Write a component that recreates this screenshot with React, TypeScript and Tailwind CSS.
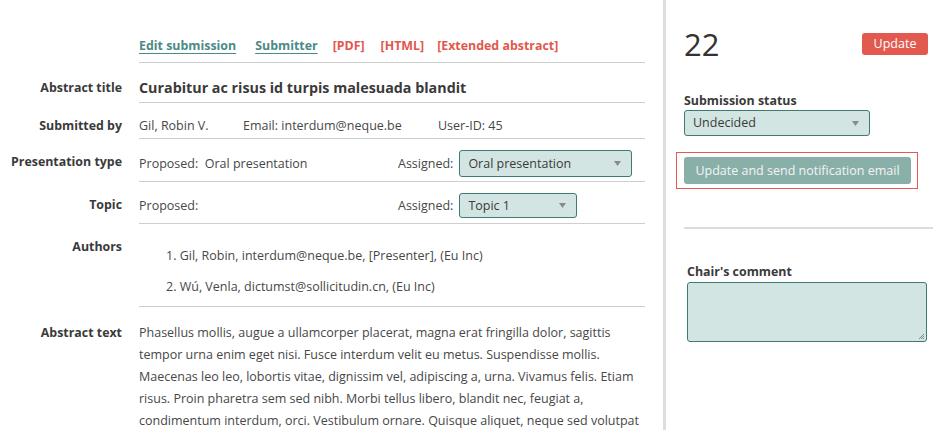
import React from "react";

const Select = ({ value, w, h }: { value: string; w: string; h: string }) => (
  <div
    className={`${w} ${h} flex items-center justify-between rounded-[3px] border border-[#3e7b75] bg-[#d3e5e2] pl-[8px] pr-[10px] text-[12.5px] text-[#3a3a3a]`}
  >
    <span>{value}</span>
    <svg width="7" height="5" viewBox="0 0 7 5">
      <path d="M0 0 L7 0 L3.5 5 Z" fill="#8a8a8a" />
    </svg>
  </div>
);

const Row = ({
  label,
  children,
  cls,
  labelCls = "",
}: {
  label?: string;
  children: React.ReactNode;
  cls: string;
  labelCls?: string;
}) => (
  <div className="flex">
    <div
      className={`w-[122px] shrink-0 text-right text-[12.4px] font-bold text-[#3a3a3a] ${labelCls}`}
    >
      {label}
    </div>
    <div className={`ml-[17px] w-[506px] border-b border-[#cfcfcf] ${cls}`}>{children}</div>
  </div>
);

const abstractLines = [
  "Phasellus mollis, augue a ullamcorper placerat, magna erat fringilla dolor, sagittis",
  "tempor urna enim eget nisi. Fusce interdum velit eu metus. Suspendisse mollis.",
  "Maecenas leo leo, lobortis vitae, dignissim vel, adipiscing a, urna. Vivamus felis. Etiam",
  "risus. Proin pharetra sem sed nibh. Morbi tellus libero, blandit nec, feugiat a,",
  "condimentum interdum, orci. Vestibulum ornare. Quisque aliquet, neque sed volutpat",
  "cursus, dolor nunc tempus diam, vel ultricies justo augue at tellus.",
];

export default function App() {
  return (
    <div
      className="flex h-[430px] w-[941px] overflow-hidden bg-white text-[12.5px] leading-[20px] text-[#474747]"
      style={{ fontFamily: '"Open Sans", "Noto Sans", sans-serif' }}
    >
      {/* Left panel */}
      <div className="w-[663px] shrink-0">
        <Row cls="pt-[36px] pb-[6px]">
          <div className="flex text-[12.4px] font-bold">
            <span className="text-[#4b8a87] underline underline-offset-[3px] decoration-[1px]">Edit submission</span>
            <span className="ml-[19px] text-[#4b8a87] underline underline-offset-[3px] decoration-[1px]">Submitter</span>
            <span className="ml-[15px] text-[#e2574c]">[PDF]</span>
            <span className="ml-[16px] text-[#e2574c]">[HTML]</span>
            <span className="ml-[13px] text-[#e2574c]">[Extended abstract]</span>
          </div>
        </Row>
        <Row label="Abstract title" cls="pt-[14px] pb-[3px]" labelCls="pt-[15px]">
          <div className="text-[14.3px] font-bold leading-[22px] text-[#3a3a3a]">
            Curabitur ac risus id turpis malesuada blandit
          </div>
        </Row>
        <Row label="Submitted by" cls="pt-[13px] pb-[2px]" labelCls="pt-[13px]">
          <div className="flex">
            <span className="w-[104px]">Gil, Robin V.</span>
            <span className="w-[195px]">Email: interdum@neque.be</span>
            <span>User-ID: 45</span>
          </div>
        </Row>
        <Row label="Presentation type" cls="pt-[11px] pb-[4px]" labelCls="pt-[13px]">
          <div className="flex items-center">
            <span className="w-[259px] whitespace-pre">Proposed:  Oral presentation</span>
            <span>Assigned:</span>
            <div className="ml-[6px]">
              <Select value="Oral presentation" w="w-[173px]" h="h-[27px]" />
            </div>
          </div>
        </Row>
        <Row label="Topic" cls="pt-[11px] pb-[5px]" labelCls="pt-[13px]">
          <div className="flex items-center">
            <span className="w-[259px]">Proposed:</span>
            <span>Assigned:</span>
            <div className="ml-[6px]">
              <Select value="Topic 1" w="w-[118px]" h="h-[25px]" />
            </div>
          </div>
        </Row>
        <Row label="Authors" cls="pt-[22px] pb-[9px]" labelCls="pt-[13px]">
          <ol className="ml-[27px] flex flex-col gap-[11px]">
            <li>1. Gil, Robin, interdum@neque.be, [Presenter], (Eu Inc)</li>
            <li>2. Wú, Venla, dictumst@sollicitudin.cn, (Eu Inc)</li>
          </ol>
        </Row>
        <div className="flex">
          <div className="w-[122px] shrink-0 pt-[16px] text-right text-[12.4px] font-bold text-[#3a3a3a]">
            Abstract text
          </div>
          <div className="ml-[17px] w-[506px] pt-[15px] leading-[22px]">
            {abstractLines.map((l) => (
              <div key={l} className="whitespace-nowrap">
                {l}
              </div>
            ))}
          </div>
        </div>
      </div>

      {/* Divider */}
      <div className="w-[3px] shrink-0 bg-[#dedede]" />

      {/* Right panel */}
      <div className="flex w-[272px] flex-col pl-[18px]">
        <div className="flex items-center justify-between pt-[24px] pr-[10px]">
          <span className="text-[31px] leading-[40px] text-[#333]">22</span>
          <div className="flex h-[22px] w-[66px] items-center justify-center rounded-[3px] bg-[#e25a4f] text-[12.5px] text-white">
            Update
          </div>
        </div>
        <div className="mt-[27px] text-[12.4px] font-bold text-[#3a3a3a]">Submission status</div>
        <div className="-mt-[1px]">
          <Select value="Undecided" w="w-[186px]" h="h-[26px]" />
        </div>
        <div className="-ml-[8px] mt-[16px] w-[242px] border-[1.5px] border-[#e35a55] px-[7px] py-[4px]">
          <div className="flex h-[27px] w-[227px] items-center justify-center rounded-[3px] bg-[#89afa9] text-[12.5px] text-[#f4f4f4]">
            Update and send notification email
          </div>
        </div>
        <div className="mt-[38px] h-[2px] w-[249px] bg-[#dcdcdc]" />
        <div className="ml-[3px] mt-[33px] text-[12.4px] font-bold text-[#3a3a3a]">Chair's comment</div>
        <div className="relative ml-[3px] h-[60px] w-[240px] rounded-[3px] border border-[#3e7b75] bg-[#d3e5e2]">
          <svg className="absolute bottom-[1px] right-[1px]" width="7" height="7" viewBox="0 0 7 7">
            <path d="M6 1 L1 6 M6 3 L3 6 M6 5 L5 6" stroke="#888" strokeWidth="1" />
          </svg>
        </div>
      </div>
    </div>
  );
}
